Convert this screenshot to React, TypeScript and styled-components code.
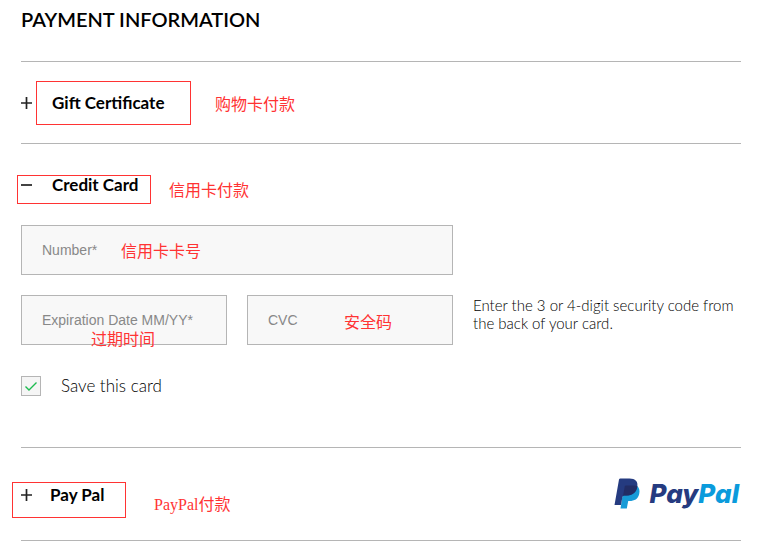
import React, { useState } from "react";
import styled, { createGlobalStyle } from "styled-components";

const GlobalStyle = createGlobalStyle`
  *, *::before, *::after { box-sizing: border-box; }
  body {
    margin: 0;
    background: #ffffff;
    color: #000000;
    font-family: Lato, "Noto Sans CJK SC", sans-serif;
  }
`;

const Page = styled.main`
  padding: 7px 34px 0 21px;
`;

const Title = styled.h1`
  margin: 0;
  padding-bottom: 30px;
  font-size: 20px;
  line-height: 24px;
  font-weight: 600;
`;

const Section = styled.section<{ $height?: number }>`
  position: relative;
  border-top: 1px solid #b5b5b5;
  min-height: ${(p) => p.$height ?? 0}px;
`;

const SectionHeader = styled.div<{ $top: number }>`
  display: flex;
  align-items: flex-start;
  padding-top: ${(p) => p.$top}px;
`;

const Toggle = styled.button<{ $gap: number }>`
  display: flex;
  align-items: center;
  gap: ${(p) => p.$gap}px;
  border: 0;
  padding: 0;
  background: none;
  color: inherit;
  font: inherit;
  font-size: 17px;
  line-height: 20px;
  font-weight: 700;
  cursor: pointer;
`;

const Sign = styled.svg`
  display: block;
  width: 11px;
  height: 12px;
  stroke: #222222;
  stroke-width: 1.7;
`;

const Outline = styled.div<{ $x: number; $y: number; $w: number; $h: number }>`
  position: absolute;
  left: ${(p) => p.$x}px;
  top: ${(p) => p.$y}px;
  width: ${(p) => p.$w}px;
  height: ${(p) => p.$h}px;
  border: 1px solid #ff3333;
  pointer-events: none;
`;

const Note = styled.span<{ $x: number; $y: number }>`
  position: absolute;
  left: ${(p) => p.$x}px;
  top: ${(p) => p.$y}px;
  color: #ff3333;
  font-family: "Liberation Serif", "Noto Sans CJK SC", serif;
  font-size: 16px;
  line-height: 20px;
  font-weight: 400;
  white-space: nowrap;
  pointer-events: none;
`;

const Fields = styled.div`
  display: grid;
  grid-template-columns: minmax(0, 206fr) minmax(0, 206fr) minmax(0, 268fr);
  gap: 20px;
  padding-top: 30px;
`;

const Field = styled.div<{ $column: string }>`
  position: relative;
  grid-column: ${(p) => p.$column};
`;

const TextInput = styled.input`
  display: block;
  width: 100%;
  height: 50px;
  padding: 0 20px;
  border: 1px solid #b5b5b5;
  border-radius: 0;
  background: #f8f8f8;
  color: #222222;
  font-family: "Liberation Sans", Arial, sans-serif;
  font-size: 14px;
  &::placeholder {
    color: #888888;
    opacity: 1;
  }
`;

const Hint = styled.p`
  grid-column: 3;
  margin: 0;
  padding-top: 1px;
  font-size: 15px;
  line-height: 18px;
  font-weight: 300;
`;

const SaveLabel = styled.label`
  display: flex;
  align-items: center;
  gap: 20px;
  width: fit-content;
  margin-top: 31px;
  font-size: 17px;
  line-height: 20px;
  font-weight: 300;
  cursor: pointer;
`;

const TickBox = styled.span`
  display: grid;
  width: 20px;
  height: 20px;
  & > * { grid-area: 1 / 1; }
`;

const Checkbox = styled.input`
  appearance: none;
  width: 20px;
  height: 20px;
  margin: 0;
  border: 1px solid #b5b5b5;
  background: #f5f5f5;
`;

const Tick = styled.svg`
  width: 20px;
  height: 20px;
  fill: none;
  stroke: #1dbb50;
  stroke-width: 1.4;
  pointer-events: none;
`;

const PayPalRow = styled.div`
  display: flex;
  justify-content: space-between;
  align-items: flex-start;
`;

const Logo = styled.div`
  display: flex;
  align-items: center;
  gap: 9px;
  padding-top: 30px;
  margin-right: 2px;
`;

const Monogram = styled.svg`
  display: block;
  width: 26px;
  height: 31px;
`;

const Wordmark = styled.span`
  font-family: Inter, sans-serif;
  font-size: 26px;
  line-height: 30px;
  font-weight: 800;
  font-style: italic;
  color: #253b80;
`;

const WordmarkAccent = styled.span`
  color: #0a9bdc;
`;

const BottomRule = styled.hr`
  margin: 0;
  border: 0;
  border-top: 1px solid #b5b5b5;
`;

function PlusSign() {
  return (
    <Sign viewBox="0 0 11 12" aria-hidden="true">
      <path d="M0 6H11M5.5 0V12" />
    </Sign>
  );
}

function MinusSign() {
  return (
    <Sign viewBox="0 0 11 12" aria-hidden="true">
      <path d="M0 6H11" />
    </Sign>
  );
}

export default function App() {
  const [save, setSave] = useState(true);
  return (
    <>
      <GlobalStyle />
      <Page>
        <Title>PAYMENT INFORMATION</Title>

        <Section $height={82}>
          <SectionHeader $top={31}>
            <Toggle type="button" $gap={20} aria-expanded={false}>
              <PlusSign />
              Gift Certificate
            </Toggle>
          </SectionHeader>
          <Outline $x={15} $y={19} $w={155} $h={44} />
          <Note $x={194} $y={33}>购物卡付款</Note>
        </Section>

        <Section $height={304}>
          <SectionHeader $top={31}>
            <Toggle type="button" $gap={20} aria-expanded={true}>
              <MinusSign />
              Credit Card
            </Toggle>
          </SectionHeader>
          <Outline $x={-4} $y={31} $w={134} $h={29} />
          <Note $x={148} $y={37}>信用卡付款</Note>

          <Fields>
            <Field $column="1 / span 2">
              <TextInput aria-label="Number" placeholder="Number*" />
              <Note $x={100} $y={17}>信用卡卡号</Note>
            </Field>
            <Field $column="1">
              <TextInput aria-label="Expiration Date" placeholder="Expiration Date MM/YY*" />
              <Note $x={70} $y={35}>过期时间</Note>
            </Field>
            <Field $column="2">
              <TextInput aria-label="CVC" placeholder="CVC" />
              <Note $x={97} $y={18}>安全码</Note>
            </Field>
            <Hint>Enter the 3 or 4-digit security code from the back of your card.</Hint>
          </Fields>

          <SaveLabel>
            <TickBox>
              <Checkbox
                type="checkbox"
                checked={save}
                onChange={(e) => setSave(e.target.checked)}
              />
              {save && (
                <Tick viewBox="0 0 20 20" aria-hidden="true">
                  <path d="M4.5 10.5L8 14L15.5 6.5" />
                </Tick>
              )}
            </TickBox>
            Save this card
          </SaveLabel>
        </Section>

        <Section $height={93}>
          <PayPalRow>
            <SectionHeader $top={37}>
              <Toggle type="button" $gap={18} aria-expanded={false}>
                <PlusSign />
                Pay Pal
              </Toggle>
            </SectionHeader>
            <Logo>
              <Monogram viewBox="0 0 26 31" aria-hidden="true">
                <path fill="#179bd7" d="M23 8C25.400 10 26 12.500 25.200 16C24 21 20.500 23 15.500 23H14.200L12.800 30.500H6.500L10 8Z" />
                <path fill="#253b80" d="M5 1.500Q5.300 0.500 6.400 0.500H15.500C21.300 0.500 24.300 3.500 23.300 8.800C22.200 14.800 18.200 17.500 12.300 17.500H10Q8.700 17.500 8.400 19L7 27H0.500Z" />
                <path fill="#222d65" d="M10.800 8Q11 7.500 12 7.500H19C21 7.500 22.300 7.700 23.400 8.200C22.400 14.700 18.300 17.500 12.300 17.500H10Q9.300 17.500 9 18Z" />
              </Monogram>
              <Wordmark>
                Pay<WordmarkAccent>Pal</WordmarkAccent>
              </Wordmark>
            </Logo>
          </PayPalRow>
          <Outline $x={-9} $y={34} $w={114} $h={36} />
          <Note $x={133} $y={47}>PayPal付款</Note>
        </Section>
        <BottomRule />
      </Page>
    </>
  );
}
